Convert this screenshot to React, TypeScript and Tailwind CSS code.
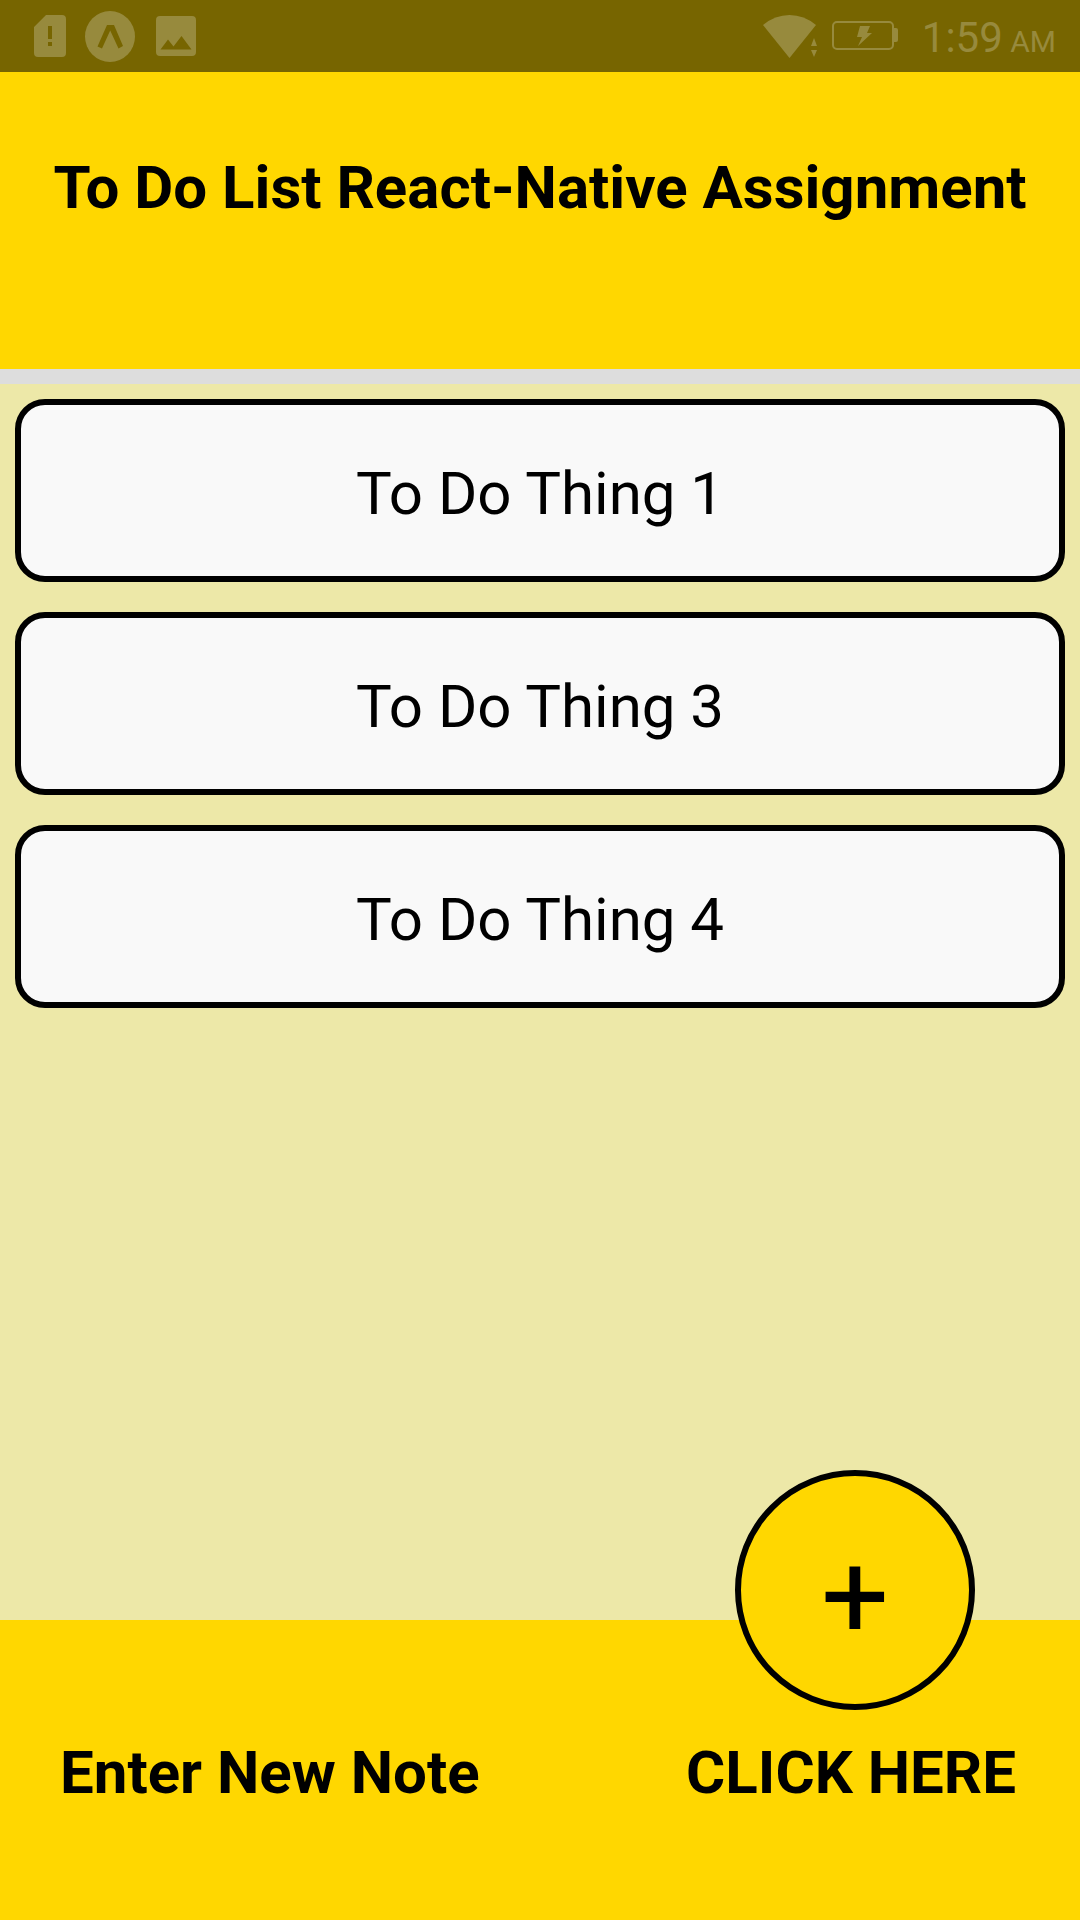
import { useState, type FormEvent } from "react";

function SimAlertIcon() {
  return (
    <svg viewBox="0 0 32 42" className="h-[42px] w-8" aria-hidden="true">
      <path
        fill="currentColor"
        fillRule="evenodd"
        d="M12 0H28a4 4 0 0 1 4 4V38a4 4 0 0 1-4 4H4a4 4 0 0 1-4-4V12ZM14 11V24H18V11ZM14 27V31H18V27Z"
      />
    </svg>
  );
}

function ExpoIcon() {
  return (
    <svg viewBox="0 0 50 51" className="h-[51px] w-[50px]" aria-hidden="true">
      <ellipse cx="25" cy="25.5" rx="25" ry="25.5" fill="currentColor" />
      <path fill="#776500" d="M22 14H29L38 35L33.500 37.500L25.200 19.500L17 37.500L12.500 35.500Z" />
    </svg>
  );
}

function PictureIcon() {
  return (
    <svg viewBox="0 0 40 40" className="size-10" aria-hidden="true">
      <path
        fill="currentColor"
        fillRule="evenodd"
        d="M4 0H36a4 4 0 0 1 4 4V36a4 4 0 0 1-4 4H4a4 4 0 0 1-4-4V4a4 4 0 0 1 4-4ZM4.500 33.500H35.500L25.500 20L17.500 30.500L12 23.500Z"
      />
    </svg>
  );
}

function WifiIcon() {
  return (
    <svg viewBox="0 0 55 43" className="h-[43px] w-[55px]" aria-hidden="true">
      <path fill="currentColor" d="M0 10Q12 0 26.500 0T53 10L26.500 43Z" />
      <path fill="currentColor" d="M51 23L54 31H48ZM48 35H54L51 42Z" />
    </svg>
  );
}

function BatteryIcon() {
  return (
    <svg viewBox="0 0 66 30" className="h-[30px] w-[66px]" aria-hidden="true">
      <rect x="1" y="1" width="60" height="27" rx="4" fill="none" stroke="currentColor" strokeWidth="2" />
      <path fill="currentColor" d="M61 7H64a2 2 0 0 1 2 2V19a2 2 0 0 1-2 2H61Z" />
      <path fill="currentColor" d="M28 5H38L35 12H40L26 25L30 16H25Z" />
    </svg>
  );
}

function StatusBar() {
  return (
    <div className="flex h-[72px] shrink-0 items-center justify-between bg-[#776500] pr-6 pl-[34px] text-[#978a3d]">
      <div className="flex items-center">
        <SimAlertIcon />
        <span className="ml-[19px]">
          <ExpoIcon />
        </span>
        <span className="ml-[21px]">
          <PictureIcon />
        </span>
      </div>
      <div className="flex items-center">
        <WifiIcon />
        <span className="ml-[14px]">
          <BatteryIcon />
        </span>
        <time className="ml-6 pt-2 text-[42px] leading-[50px]">
          1:59<span className="text-[30px]"> AM</span>
        </time>
      </div>
    </div>
  );
}

export default function App() {
  const [notes, setNotes] = useState(["To Do Thing 1", "To Do Thing 3", "To Do Thing 4"]);
  const [draft, setDraft] = useState("");

  const addNote = (event: FormEvent) => {
    event.preventDefault();
    if (draft.trim()) {
      setNotes([...notes, draft.trim()]);
      setDraft("");
    }
  };

  return (
    <div className="flex min-h-screen flex-col bg-[#ede8a8] font-[Roboto,sans-serif] text-black">
      <StatusBar />
      <header className="border-b-[15px] border-[#dddddd] bg-[#ffd700] pt-[81px] pb-[146px]">
        <h1 className="text-center text-[60px] leading-[70px] font-bold">
          To Do List React-Native Assignment
        </h1>
      </header>
      <main className="flex-1">
        <ul className="flex flex-col gap-[30px] p-[15px]">
          {notes.map((note) => (
            <li
              key={note}
              className="rounded-[30px] border-6 border-black bg-[#f9f9f9] pt-[54px] pb-[47px] text-center text-[60px] leading-[70px]"
            >
              {note}
            </li>
          ))}
        </ul>
      </main>
      <form
        onSubmit={addNote}
        className="relative flex items-start justify-between bg-[#ffd700] pr-16 pl-[60px] pt-[118px] pb-28 text-[60px] leading-[70px] font-bold"
      >
        <input
          aria-label="New note"
          placeholder="Enter New Note"
          value={draft}
          onChange={(event) => setDraft(event.target.value)}
          className="h-[70px] w-0 min-w-0 flex-1 bg-transparent outline-none placeholder:text-black placeholder:opacity-100"
        />
        <label htmlFor="add-note">CLICK HERE</label>
        <button
          id="add-note"
          type="submit"
          className="absolute -top-[150px] right-[105px] flex size-60 items-center justify-center rounded-full border-6 border-black bg-[#ffd700] pt-3.5 text-[120px] leading-[140px] font-normal"
        >
          +
        </button>
      </form>
    </div>
  );
}
